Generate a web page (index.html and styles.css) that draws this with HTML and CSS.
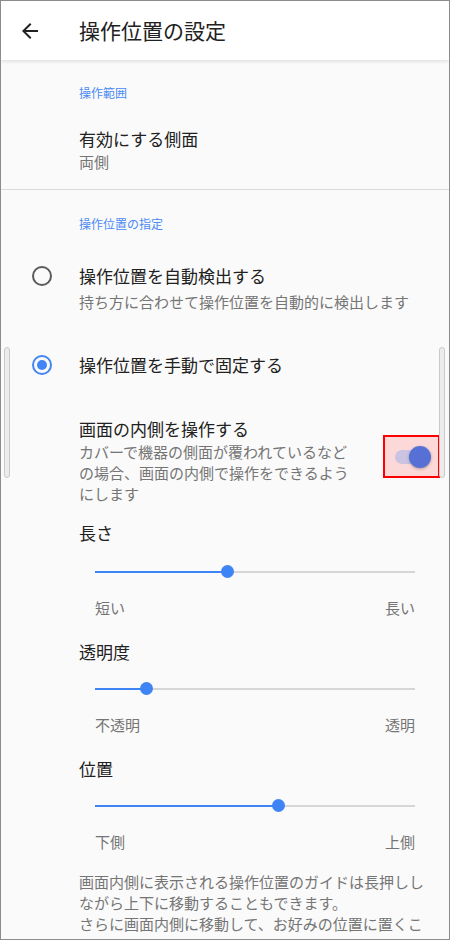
FILE: index.html
```html
<!DOCTYPE html>
<html lang="ja">
<head>
    <meta charset="UTF-8">
    <meta name="viewport" content="width=device-width, initial-scale=1.0">
    <title>操作位置の設定</title>
    <link rel="stylesheet" href="styles.css">
</head>
<body>
    <div class="screen">
        <header class="app-bar">
            <div class="back">
                <svg width="24" height="24" viewBox="0 0 24 24"><path d="M20 11H7.83l5.59-5.59L12 4l-8 8 8 8 1.41-1.41L7.83 13H20v-2z" fill="#212121"/></svg>
            </div>
            <h1 class="app-title">操作位置の設定</h1>
        </header>

        <section class="group first">
            <div class="group-label">操作範囲</div>
            <div class="item">
                <div class="item-title">有効にする側面</div>
                <div class="item-sub">両側</div>
            </div>
        </section>

        <hr class="divider">

        <section class="group second">
            <div class="group-label">操作位置の指定</div>

            <div class="radio-row auto">
                <span class="radio"></span>
                <div>
                    <div class="item-title">操作位置を自動検出する</div>
                    <div class="item-sub spaced">持ち方に合わせて操作位置を自動的に検出します</div>
                </div>
            </div>

            <div class="radio-row manual">
                <span class="radio checked"></span>
                <div class="item-title">操作位置を手動で固定する</div>
            </div>

            <div class="toggle-row">
                <div class="toggle-text">
                    <div class="item-title">画面の内側を操作する</div>
                    <div class="item-desc narrow">カバーで機器の側面が覆われているなどの場合、画面の内側で操作をできるようにします</div>
                </div>
                <div class="mark">
                    <div class="switch">
                        <span class="track"></span>
                        <span class="thumb"></span>
                    </div>
                </div>
            </div>

            <div class="slider-group">
                <div class="item-title">長さ</div>
                <div class="slider"><div class="rail"><div class="fill" style="width: 41.25%"></div><span class="knob" style="left: 41.25%"></span></div></div>
                <div class="ends"><span>短い</span><span>長い</span></div>
            </div>

            <div class="slider-group">
                <div class="item-title">透明度</div>
                <div class="slider"><div class="rail"><div class="fill" style="width: 16%"></div><span class="knob" style="left: 16%"></span></div></div>
                <div class="ends"><span>不透明</span><span>透明</span></div>
            </div>

            <div class="slider-group">
                <div class="item-title">位置</div>
                <div class="slider"><div class="rail"><div class="fill" style="width: 57.2%"></div><span class="knob" style="left: 57.2%"></span></div></div>
                <div class="ends"><span>下側</span><span>上側</span></div>
            </div>

            <p class="item-desc note">画面内側に表示される操作位置のガイドは長押ししながら上下に移動することもできます。<br>さらに画面内側に移動して、お好みの位置に置くこともできます。</p>
        </section>

        <span class="edge left"></span>
        <span class="edge right"></span>
    </div>
</body>
</html>
```

FILE: styles.css
```css
* {
    margin: 0;
    padding: 0;
    box-sizing: border-box;
    font-family: "Noto Sans CJK JP", "Noto Sans", sans-serif;
    font-weight: 400;
}

body {
    background-color: #ffffff;
}

.screen {
    position: relative;
    width: 450px;
    height: 940px;
    border: 1px solid #8c8c8c;
    background-color: #fafafa;
    overflow: hidden;
}

.app-bar {
    height: 59px;
    display: flex;
    align-items: center;
    background-color: #ffffff;
    box-shadow: 0 1px 4px rgba(0, 0, 0, 0.14);
    position: relative;
    z-index: 1;
}

.back {
    width: 78px;
    padding-left: 17px;
    display: flex;
    align-items: center;
}

.app-title {
    font-size: 21px;
    color: #212121;
    line-height: 28px;
    margin-top: -2px;
}

.group {
    padding-left: 78px;
}

.group.first {
    padding-top: 25px;
    padding-bottom: 16px;
}

.group.second {
    padding-top: 26px;
}

.group-label {
    font-size: 12px;
    line-height: 16px;
    color: #4a8af4;
}

.item {
    margin-top: 27px;
}

.item-title {
    font-size: 17px;
    line-height: 22px;
    color: #212121;
}

.item-sub {
    font-size: 15px;
    line-height: 22px;
    color: #757575;
    margin-top: 1px;
}

.item-sub.spaced {
    margin-top: 4px;
}

.divider {
    border: none;
    border-top: 1px solid #dadada;
}

.radio-row {
    position: relative;
}

.radio-row.auto {
    margin-top: 33px;
}

.radio-row.manual {
    margin-top: 41px;
}

.radio {
    position: absolute;
    left: -47px;
    top: 1px;
    width: 20px;
    height: 20px;
    border: 2px solid #5a5a5a;
    border-radius: 50%;
}

.radio.checked {
    border-color: #4285f4;
}

.radio.checked::after {
    content: "";
    position: absolute;
    left: 3px;
    top: 3px;
    width: 10px;
    height: 10px;
    border-radius: 50%;
    background-color: #4285f4;
}

.toggle-row {
    margin-top: 42px;
    display: flex;
    padding-right: 9px;
}

.toggle-text {
    flex: 1;
}

.item-desc {
    font-size: 15px;
    line-height: 21px;
    color: #757575;
}

.item-desc.narrow {
    margin-top: 1px;
    max-width: 278px;
}

.mark {
    width: 57px;
    height: 43px;
    margin-top: 17px;
    border: 2px solid #ff0000;
    background-color: #fcd8d8;
    display: flex;
    align-items: center;
    justify-content: center;
}

.switch {
    position: relative;
    width: 36px;
    height: 22px;
    margin-left: 2px;
}

.track {
    position: absolute;
    left: 0;
    top: 4px;
    width: 32px;
    height: 14px;
    border-radius: 7px;
    background-color: #cbc3e2;
}

.thumb {
    position: absolute;
    right: 0;
    top: 0;
    width: 22px;
    height: 22px;
    border-radius: 50%;
    background-color: #5670d6;
    box-shadow: 0 1px 3px rgba(0, 0, 0, 0.3);
}

.slider-group {
    margin-top: 23px;
    padding-right: 18px;
}

.toggle-row + .slider-group {
    margin-top: 18px;
}

.slider {
    height: 30px;
    margin-top: 11px;
    padding: 0 16px;
    display: flex;
    align-items: center;
}

.toggle-row + .slider-group .slider {
    margin-top: 13px;
}

.rail {
    position: relative;
    flex: 1;
    height: 2px;
    background-color: #d6d6d6;
}

.fill {
    height: 2px;
    background-color: #3f84f5;
}

.knob {
    position: absolute;
    top: -6px;
    width: 13px;
    height: 13px;
    margin-left: -6px;
    border-radius: 50%;
    background-color: #3f84f5;
}

.ends {
    margin-top: 11px;
    padding: 0 16px;
    display: flex;
    justify-content: space-between;
    font-size: 15px;
    line-height: 20px;
    color: #757575;
}

.note {
    margin-top: 19px;
    padding-right: 19px;
}

.edge {
    position: absolute;
    top: 346px;
    width: 6px;
    height: 131px;
    border: 1px solid #c9c9c9;
    border-radius: 3px;
    background-color: #ececec;
}

.edge.left {
    left: 3px;
}

.edge.right {
    left: 438px;
}
```
